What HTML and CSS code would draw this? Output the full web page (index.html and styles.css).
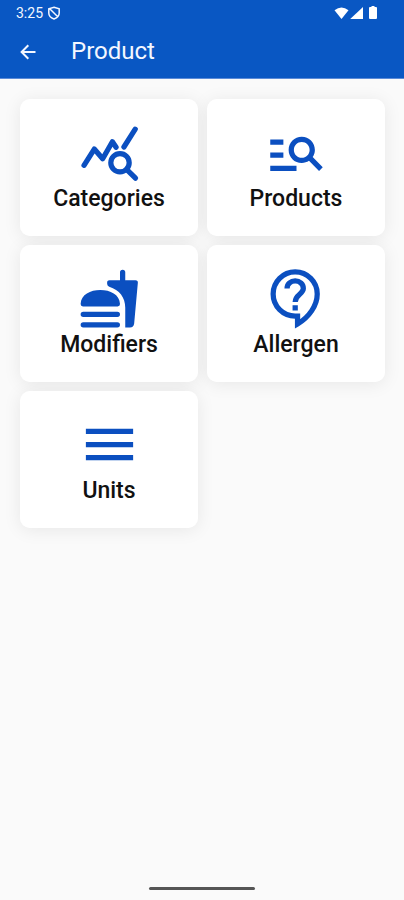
FILE: index.html
```html
<!DOCTYPE html>
<html lang="en">
<head>
<meta charset="utf-8">
<meta name="viewport" content="width=device-width, initial-scale=1">
<title>Product</title>
<link rel="stylesheet" href="styles.css">
</head>
<body>
<header class="header">
  <div class="status">
    <div class="status-group">
      <span>3:25</span>
      <svg class="shield" viewBox="0 0 14 14" fill="none" stroke="currentColor" stroke-width="1.5"><path d="M7 1.200 12.200 2.800V7c0 2.800-2 4.900-5.200 6C3.800 11.900 1.800 9.800 1.800 7V2.800zM3 3l8 8"/></svg>
    </div>
    <div class="status-group signals">
      <svg class="wifi" viewBox="0 0 15 12"><path d="M.5 3.200Q7.500-2 14.500 3.200L7.500 12z"/></svg>
      <svg class="cell" viewBox="0 0 13 12"><path d="M13 0v12H.2z"/></svg>
      <svg class="battery" viewBox="0 0 8 13"><path d="M2.500 0h3v1H7q1 0 1 1v10q0 1-1 1H1q-1 0-1-1V2q0-1 1-1h1.500z"/></svg>
    </div>
  </div>
  <div class="bar">
    <button class="back" type="button" aria-label="Back">
      <svg viewBox="0 0 16 16" fill="none" stroke="currentColor" stroke-width="2"><path d="M15.500 8H2M8.300 1.300 1.600 8l6.700 6.700"/></svg>
    </button>
    <h1 class="title">Product</h1>
  </div>
</header>
<main class="grid">
  <a class="card" href="#categories">
    <svg class="icon line" viewBox="0 0 24 24"><path d="M2.300 16.900 6.200 10.700 9.400 14.400 13.100 7.900 14.500 10M17.500 9.900 21.800 3.100M18.500 18.400 21.900 21.800"/><circle cx="16" cy="15.900" r="3.500"/></svg>
    <span>Categories</span>
  </a>
  <a class="card" href="#products">
    <svg class="icon" viewBox="0 0 24 24"><path d="M7 9H2V7h5v2zm0 3H2v2h5v-2zm13.590 7l-3.830-3.830c-.8.520-1.740.830-2.760.830-2.760 0-5-2.240-5-5s2.240-5 5-5 5 2.240 5 5c0 1.020-.31 1.960-.83 2.750L22 17.590 20.590 19zM17 11c0-1.650-1.350-3-3-3s-3 1.350-3 3 1.350 3 3 3 3-1.350 3-3zM2 19h10v-2H2v2z"/></svg>
    <span>Products</span>
  </a>
  <a class="card" href="#modifiers">
    <svg class="icon" viewBox="0 0 24 24"><path d="M1.900 15Q1 15 1 14.100C1.200 10.500 4.700 8.800 8.500 8.800s7.300 1.700 7.500 5.300q0 .9-.9.900zM2 17h13a1 1 0 0 1 0 2H2a1 1 0 0 1 0-2zM2 21h13a1 1 0 0 1 0 2H2a1 1 0 0 1 0-2zM16 5V2a1 1 0 0 1 2 0v3h3.900q1 0 .9 1L21.400 21.500Q21.200 23 19.800 23H18V15.500C18 11.500 15.800 8.800 11.900 7.500Q11.200 7.300 11.100 6.500V6Q11 5 12 5z"/></svg>
    <span>Modifiers</span>
  </a>
  <a class="card" href="#allergen">
    <svg class="icon line sharp" viewBox="0 0 24 24"><path d="M12.400 18.700H11.500A8.400 8.400 0 1 1 19.900 10.300C19.900 14.700 16.700 19.200 12.400 21.700zM8.400 8.200C8.400 6.400 9.800 5.300 11.500 5.300S14.600 6.500 14.600 8.200C14.600 10.300 11.500 10.500 11.500 13.300M11.500 14.600v2"/></svg>
    <span>Allergen</span>
  </a>
  <a class="card" href="#units">
    <svg class="icon" viewBox="0 0 24 24"><path d="M3 6h18v2H3zM3 11h18v2H3zM3 16h18v2H3z"/></svg>
    <span>Units</span>
  </a>
</main>
<footer class="nav"><div class="handle"></div></footer>
</body>
</html>
```
FILE: styles.css
```css
* { box-sizing: border-box; }

body {
  margin: 0;
  min-height: 100vh;
  display: flex;
  flex-direction: column;
  background: #fafafa;
  color: #111;
  font-family: Roboto, "Liberation Sans", sans-serif;
}

.header {
  background: #0957c3;
  color: #f4f7ff;
  border-bottom: 1px solid #5b8bd8;
}

.status {
  display: flex;
  justify-content: space-between;
  align-items: center;
  height: 25px;
  padding: 0 27px 0 16px;
  font-size: 14px;
}

.status-group {
  display: flex;
  align-items: center;
  gap: 4px;
}

.signals { gap: 1px; fill: #fff; }
.shield { width: 14px; height: 14px; }
.wifi { width: 15px; height: 12px; }
.cell { width: 13px; height: 12px; }
.battery { width: 8px; height: 13px; margin-left: 5px; }

.bar {
  display: flex;
  align-items: center;
  height: 53px;
  padding: 0 20px;
  gap: 35px;
}

.back {
  display: flex;
  padding: 0;
  border: 0;
  background: none;
  color: inherit;
}

.back svg { width: 16px; height: 16px; }

.title {
  margin: 0;
  font-size: 24px;
  font-weight: 400;
  line-height: 29px;
}

.grid {
  flex: 1;
  display: grid;
  grid-template-columns: 1fr 1fr;
  align-content: start;
  gap: 9px;
  padding: 20px 19px 0 20px;
  isolation: isolate;
}

.card {
  position: relative;
  display: flex;
  flex-direction: column;
  align-items: center;
  padding: 22px 8px;
  border-radius: 10px;
  background: #fff;
  color: inherit;
  font-size: 23px;
  font-weight: 500;
  line-height: 30px;
  text-decoration: none;
}

/* The shadow sits on a layer below all cards, so it never shades a neighbour. */
.card::before {
  content: "";
  position: absolute;
  inset: 0;
  z-index: -1;
  border-radius: inherit;
  box-shadow: 0 2px 18px rgba(0, 0, 0, 0.08);
}

.icon {
  width: 63px;
  height: 63px;
  fill: #0b4fc0;
}

.line {
  fill: none;
  stroke: #0b4fc0;
  stroke-width: 2;
  stroke-linecap: round;
  stroke-linejoin: round;
}

.sharp {
  stroke-linecap: butt;
  stroke-linejoin: miter;
}

.nav {
  display: flex;
  justify-content: center;
  padding-bottom: 10px;
}

.handle {
  width: 106px;
  height: 3px;
  border-radius: 2px;
  background: #555;
}
```
